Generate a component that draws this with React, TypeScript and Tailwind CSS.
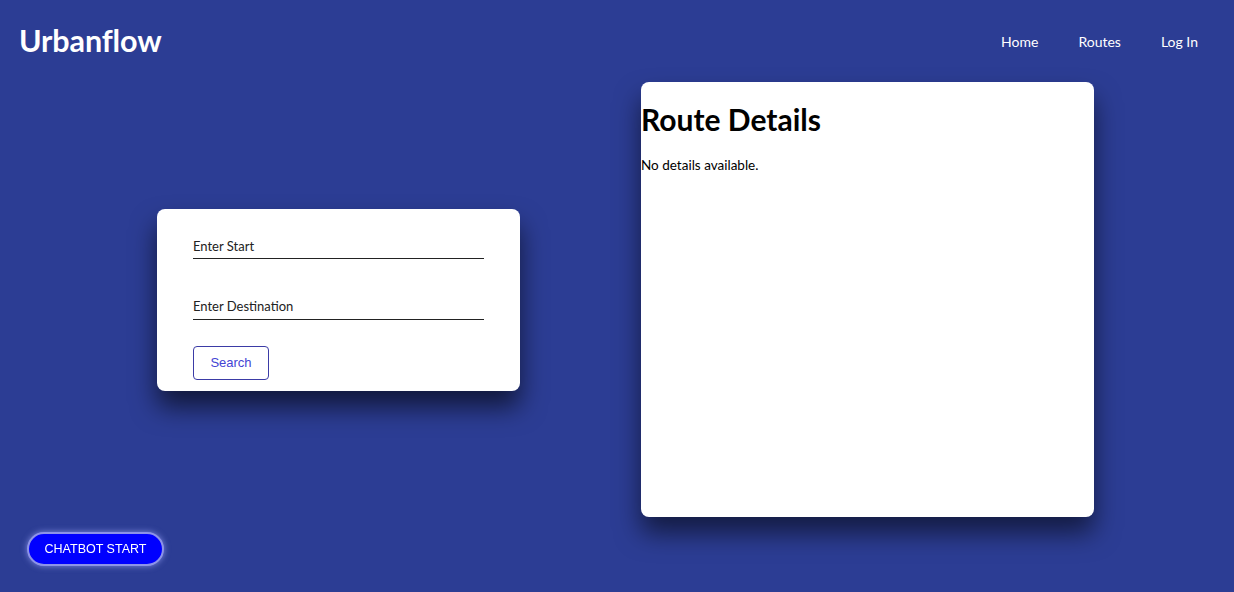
import { useState } from "react"

export default function App() {
  const [start, setStart] = useState("")
  const [destination, setDestination] = useState("")

  return (
    <div className="min-h-screen bg-[#2c3d94] font-['Lato',sans-serif] text-black">
      <header className="flex h-[82px] items-center justify-between pl-[19px] pr-[36px]">
        <h1 className="text-[30.5px] font-bold text-white tracking-[-0.1px]">Urbanflow</h1>
        <nav className="flex gap-[40px] text-[14px] text-white">
          <a href="#">Home</a>
          <a href="#">Routes</a>
          <a href="#">Log In</a>
        </nav>
      </header>

      <main className="flex items-center pl-[157px] gap-[121px]">
        <div className="w-[363px] rounded-lg bg-white px-[36px] pt-[28px] pb-[11px] shadow-[0_16px_26px_rgba(0,0,0,0.6)]">
          <input
            type="text"
            placeholder="Enter Start"
            value={start}
            onChange={(e) => setStart(e.target.value)}
            className="block w-[291px] border-b border-[#222] pb-[2px] text-[13px] outline-none placeholder:text-[#222]"
          />
          <input
            type="text"
            placeholder="Enter Destination"
            value={destination}
            onChange={(e) => setDestination(e.target.value)}
            className="mt-[38px] block w-[291px] border-b border-[#222] pb-[2px] text-[13px] outline-none placeholder:text-[#222]"
          />
          <button className="mt-[26px] h-[34px] w-[76px] rounded-[4px] border border-[#3b3ba6] font-['Liberation_Sans',sans-serif] text-[13px] text-[#4444d4]">
            Search
          </button>
        </div>

        <div className="h-[435px] w-[453px] rounded-lg bg-white shadow-[0_16px_26px_rgba(0,0,0,0.55)]">
          <h2 className="mt-[20px] text-[30px] font-bold leading-[34px]">Route Details</h2>
          <p className="mt-[19px] text-[13.5px]">No details available.</p>
        </div>
      </main>

      <button className="fixed bottom-[26px] left-[27px] h-[34px] w-[137px] rounded-full border-2 border-[#8d93e8] bg-[#0000ff] font-['Liberation_Sans',sans-serif] text-[12.5px] text-white shadow-[0_0_6px_rgba(160,170,255,0.7)]">
        CHATBOT START
      </button>
    </div>
  )
}
